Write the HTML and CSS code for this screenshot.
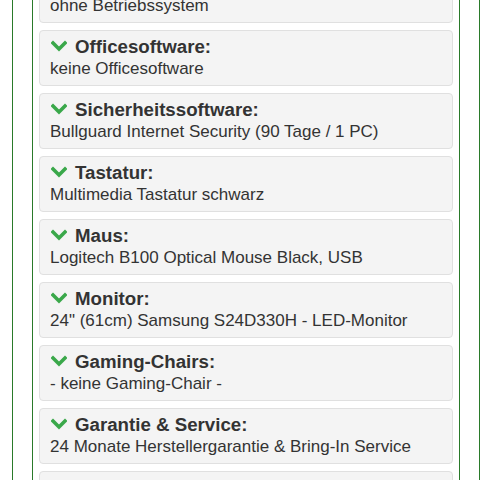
FILE: index.html
```html
<!DOCTYPE html>
<html>
<head>
<meta charset="utf-8">
<link rel="stylesheet" href="styles.css">
</head>
<body>
<div class="outer">
  <div class="inner">
    <div class="list">
      <div class="card">
        <div class="title"><svg class="chev" viewBox="0 0 16 12"><polyline points="2,3 8,9 14,3"/></svg>Betriebssystem:</div>
        <div class="value">ohne Betriebssystem</div>
      </div>
      <div class="card">
        <div class="title"><svg class="chev" viewBox="0 0 16 12"><polyline points="2,3 8,9 14,3"/></svg>Officesoftware:</div>
        <div class="value">keine Officesoftware</div>
      </div>
      <div class="card">
        <div class="title"><svg class="chev" viewBox="0 0 16 12"><polyline points="2,3 8,9 14,3"/></svg>Sicherheitssoftware:</div>
        <div class="value">Bullguard Internet Security (90 Tage / 1 PC)</div>
      </div>
      <div class="card">
        <div class="title"><svg class="chev" viewBox="0 0 16 12"><polyline points="2,3 8,9 14,3"/></svg>Tastatur:</div>
        <div class="value">Multimedia Tastatur schwarz</div>
      </div>
      <div class="card">
        <div class="title"><svg class="chev" viewBox="0 0 16 12"><polyline points="2,3 8,9 14,3"/></svg>Maus:</div>
        <div class="value">Logitech B100 Optical Mouse Black, USB</div>
      </div>
      <div class="card">
        <div class="title"><svg class="chev" viewBox="0 0 16 12"><polyline points="2,3 8,9 14,3"/></svg>Monitor:</div>
        <div class="value">24" (61cm) Samsung S24D330H - LED-Monitor</div>
      </div>
      <div class="card">
        <div class="title"><svg class="chev" viewBox="0 0 16 12"><polyline points="2,3 8,9 14,3"/></svg>Gaming-Chairs:</div>
        <div class="value">- keine Gaming-Chair -</div>
      </div>
      <div class="card">
        <div class="title"><svg class="chev" viewBox="0 0 16 12"><polyline points="2,3 8,9 14,3"/></svg>Garantie &amp; Service:</div>
        <div class="value">24 Monate Herstellergarantie &amp; Bring-In Service</div>
      </div>
      <div class="card">
        <div class="title"><svg class="chev" viewBox="0 0 16 12"><polyline points="2,3 8,9 14,3"/></svg>Versand:</div>
        <div class="value">Standardversand</div>
      </div>
    </div>
  </div>
</div>
</body>
</html>
```
FILE: styles.css
```css
html, body {
  margin: 0;
  padding: 0;
  background: #fff;
  height: 480px;
  overflow: hidden;
}
body {
  font-family: "Liberation Sans", Arial, sans-serif;
  color: #333;
}
.outer {
  margin-left: 12px;
  width: 466px;
  border-left: 1px solid #2a7a2a;
  border-right: 1px solid #2a7a2a;
  height: 480px;
  overflow: hidden;
}
.inner {
  margin-left: 19px;
  margin-right: 19px;
  border-left: 1px solid #2a7a2a;
  border-right: 1px solid #2a7a2a;
  padding: 0 6px 0 6px;
  height: 480px;
  overflow: hidden;
}
.list {
  margin-top: -33px;
  display: flex;
  flex-direction: column;
  gap: 7px;
}
.card {
  background: #f4f4f4;
  border: 1px solid #e0e0e0;
  border-radius: 4px;
  padding: 5px 10px;
}
.title {
  font-size: 18.7px;
  font-weight: bold;
  line-height: 22px;
  display: flex;
  align-items: center;
  white-space: nowrap;
}
.chev {
  width: 16px;
  height: 12px;
  margin: 0 8px 0 1px;
  position: relative;
  top: -1px;
}
.chev polyline {
  fill: none;
  stroke: #3aa84a;
  stroke-width: 3.6;
  stroke-linecap: square;
}
.value {
  font-size: 17px;
  line-height: 22px;
  white-space: nowrap;
}
```
